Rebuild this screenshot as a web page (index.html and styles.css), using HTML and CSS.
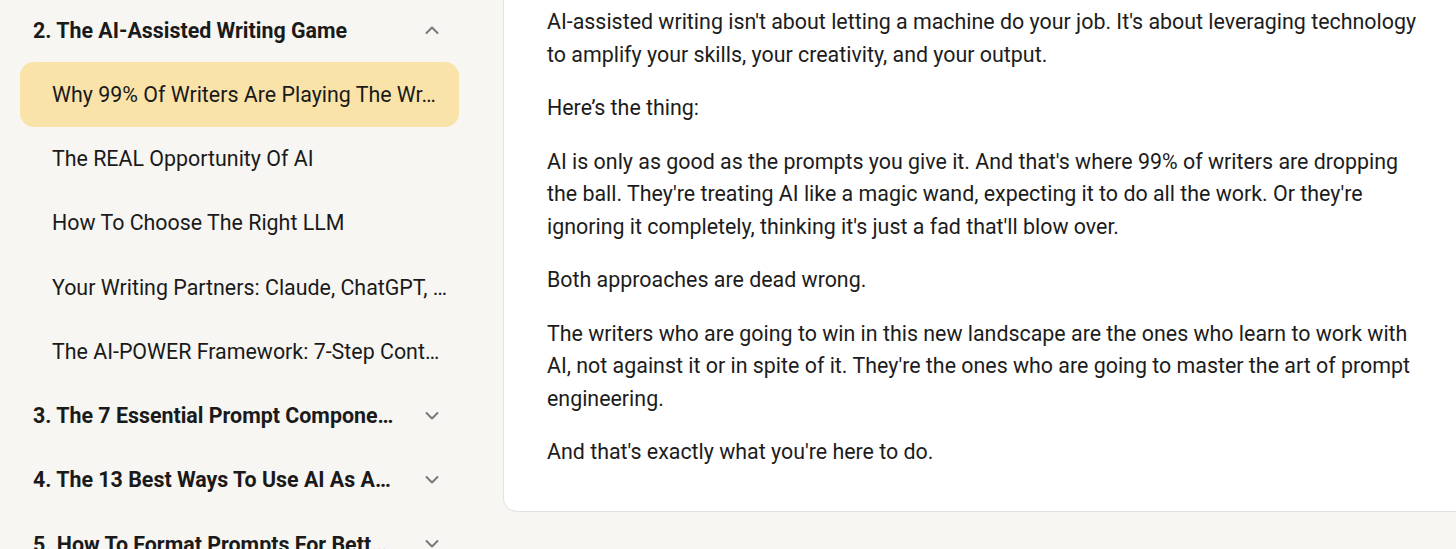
FILE: index.html
```html
<!DOCTYPE html>
<html lang="en">
<head>
<meta charset="utf-8">
<title>AI-Assisted Writing</title>
<link rel="stylesheet" href="styles.css">
</head>
<body>
<div class="page">
  <nav class="sidebar">
    <div class="section-row">
      <span class="section-title">2. The AI-Assisted Writing Game</span>
      <svg class="chev" viewBox="0 0 16 10" width="16" height="10"><path d="M2.5 8 L8 2.5 L13.5 8" fill="none" stroke="#787878" stroke-width="2" stroke-linecap="round" stroke-linejoin="round"/></svg>
    </div>
    <div class="lesson active"><span class="lesson-title">Why 99% Of Writers Are Playing The Wr…</span></div>
    <div class="lesson"><span class="lesson-title">The REAL Opportunity Of AI</span></div>
    <div class="lesson"><span class="lesson-title">How To Choose The Right LLM</span></div>
    <div class="lesson"><span class="lesson-title">Your Writing Partners: Claude, ChatGPT, …</span></div>
    <div class="lesson"><span class="lesson-title">The AI-POWER Framework: 7-Step Cont…</span></div>
    <div class="section-row">
      <span class="section-title">3. The 7 Essential Prompt Compone…</span>
      <svg class="chev" viewBox="0 0 16 10" width="16" height="10"><path d="M2.5 2 L8 7.5 L13.5 2" fill="none" stroke="#787878" stroke-width="2" stroke-linecap="round" stroke-linejoin="round"/></svg>
    </div>
    <div class="section-row">
      <span class="section-title">4. The 13 Best Ways To Use AI As A…</span>
      <svg class="chev" viewBox="0 0 16 10" width="16" height="10"><path d="M2.5 2 L8 7.5 L13.5 2" fill="none" stroke="#787878" stroke-width="2" stroke-linecap="round" stroke-linejoin="round"/></svg>
    </div>
    <div class="section-row">
      <span class="section-title">5. How To Format Prompts For Bett…</span>
      <svg class="chev" viewBox="0 0 16 10" width="16" height="10"><path d="M2.5 2 L8 7.5 L13.5 2" fill="none" stroke="#787878" stroke-width="2" stroke-linecap="round" stroke-linejoin="round"/></svg>
    </div>
  </nav>
  <main class="content">
    <article class="card">
      <p>AI-assisted writing isn't about letting a machine do your job. It's about leveraging technology to amplify your skills, your creativity, and your output.</p>
      <p>Here’s the thing:</p>
      <p>AI is only as good as the prompts you give it. And that's where 99% of writers are dropping the ball. They're treating AI like a magic wand, expecting it to do all the work. Or they're ignoring it completely, thinking it's just a fad that'll blow over.</p>
      <p>Both approaches are dead wrong.</p>
      <p>The writers who are going to win in this new landscape are the ones who learn to work with AI, not against it or in spite of it. They're the ones who are going to master the art of prompt engineering.</p>
      <p>And that's exactly what you're here to do.</p>
    </article>
  </main>
</div>
</body>
</html>
```

FILE: styles.css
```css
* { box-sizing: border-box; }
html, body {
  margin: 0;
  padding: 0;
  background: #f7f6f3;
  font-family: Roboto, "Liberation Sans", Arial, sans-serif;
  color: #1c1c1c;
  overflow: hidden;
}
.page {
  display: flex;
  align-items: flex-start;
  height: 549px;
}
.sidebar {
  width: 503px;
  flex-shrink: 0;
  padding: 0 44px 0 20px;
  margin-top: -2px;
  display: flex;
  flex-direction: column;
}
.section-row {
  height: 64.25px;
  flex-shrink: 0;
  display: flex;
  align-items: center;
  padding: 0 19px 0 13px;
  gap: 16px;
}
.section-title {
  flex: 1;
  min-width: 0;
  font-size: 21.4px;
  font-weight: 700;
  white-space: nowrap;
  color: #1a1a1a;
}
.chev {
  flex-shrink: 0;
  display: block;
}
.lesson {
  height: 64.25px;
  flex-shrink: 0;
  display: flex;
  align-items: center;
  padding: 0 8px 0 32px;
  border-radius: 14px;
}
.lesson.active {
  background: #f9e3a9;
}
.lesson-title {
  font-size: 21.4px;
  white-space: nowrap;
  color: #1a1a1a;
}
.content {
  flex: 1;
  min-width: 0;
}
.card {
  background: #ffffff;
  border-left: 1px solid #e4e3e0;
  border-bottom: 1px solid #e4e3e0;
  border-bottom-left-radius: 14px;
  height: 512px;
  padding: 6px 0 0 43px;
  width: 1000px;
}
.card p {
  margin: 0 0 21px;
  max-width: 880px;
  font-size: 21.4px;
  line-height: 32.5px;
  color: #1c1c1c;
}
```
